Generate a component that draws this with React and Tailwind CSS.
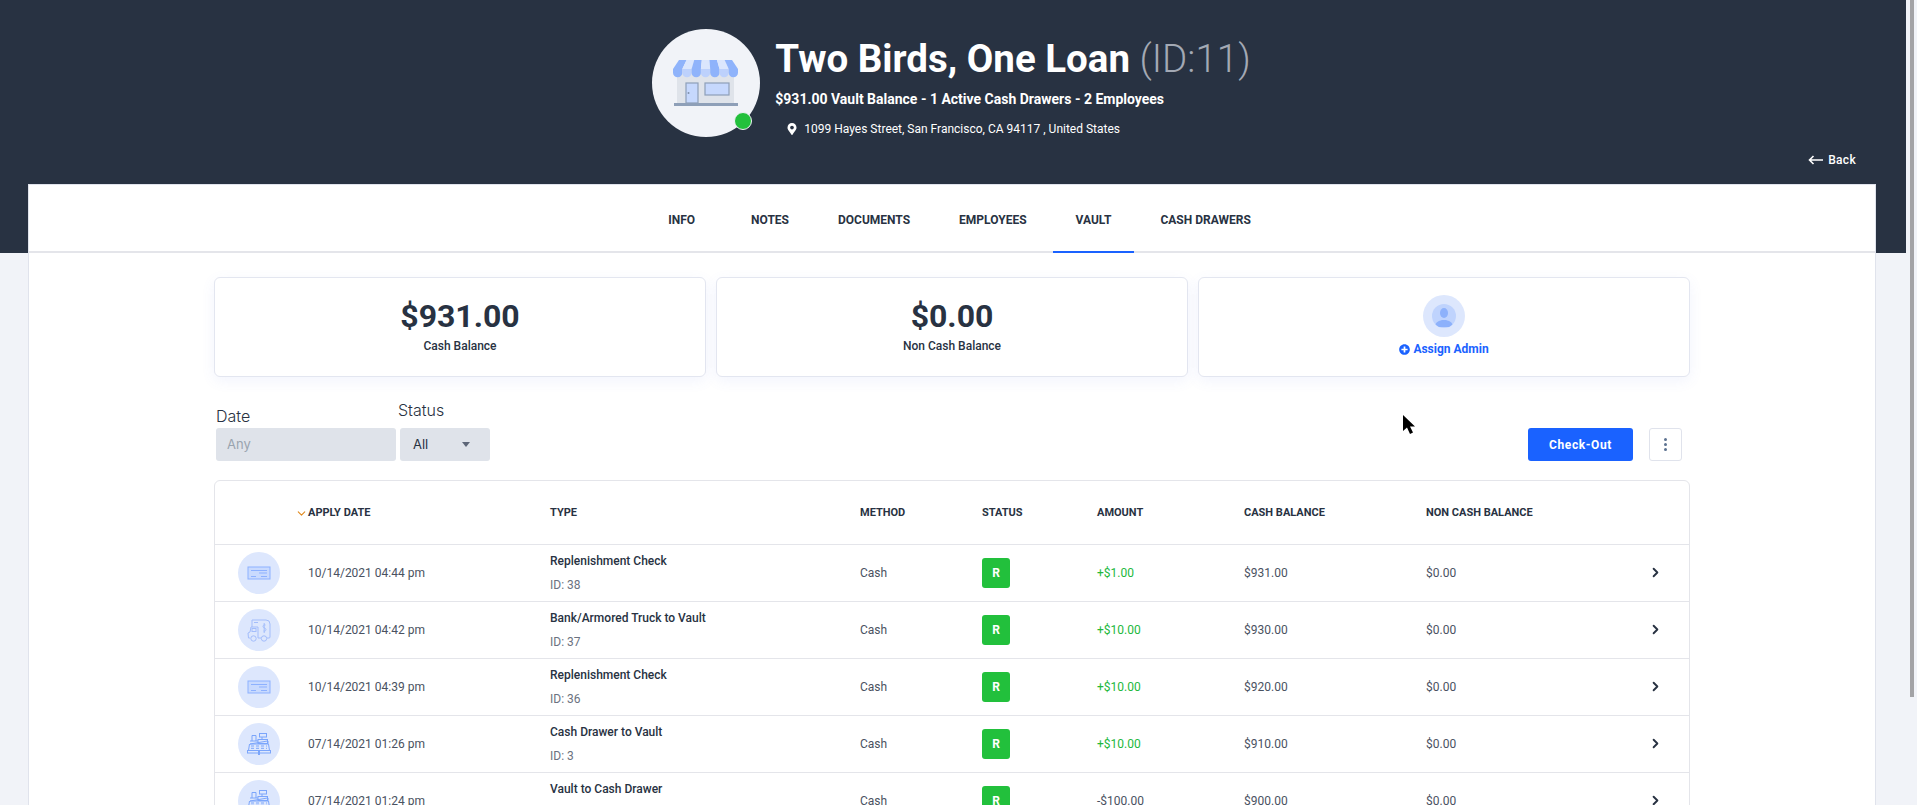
import React from 'react'
import { ChevronDown, ChevronRight } from 'lucide-react'
import { FaMapMarkerAlt, FaPlusCircle } from 'react-icons/fa'

const TABS = ['Info','Notes','Documents','Employees','Vault','Cash Drawers']

const ROWS = [
  { icon:'check', date:'10/14/2021 04:44 pm', type:'Replenishment Check', id:'ID: 38', amount:'+$1.00', cash:'$931.00' },
  { icon:'truck', date:'10/14/2021 04:42 pm', type:'Bank/Armored Truck to Vault', id:'ID: 37', amount:'+$10.00', cash:'$930.00' },
  { icon:'check', date:'10/14/2021 04:39 pm', type:'Replenishment Check', id:'ID: 36', amount:'+$10.00', cash:'$920.00' },
  { icon:'register', date:'07/14/2021 01:26 pm', type:'Cash Drawer to Vault', id:'ID: 3', amount:'+$10.00', cash:'$910.00' },
  { icon:'register', date:'07/14/2021 01:24 pm', type:'Vault to Cash Drawer', id:'ID: 2', amount:'-$100.00', cash:'$900.00' },
]

const COLS = 'grid grid-cols-[93px_242px_310px_122px_115px_147px_182px_1fr] items-center'

function StoreIcon(){
  return (
    <svg width="66" height="46" viewBox="0 0 66 46">
      <rect x="4" y="8" width="57" height="36" fill="#dfe3ea" />
      <rect x="13" y="23" width="12" height="20" fill="#c6d8fd" stroke="#8e9fb8" strokeWidth="1.2" />
      <circle cx="15.5" cy="33" r="1" fill="#7f91ab" />
      <rect x="32" y="23" width="24" height="12" fill="#c6d8fd" stroke="#8e9fb8" strokeWidth="1.2" />
      <rect x="1" y="43" width="64" height="3" fill="#8e9fb8" />
      {/* awning */}
      <path d="M6 0h7.600L9.300 9H0z" fill="#8fb3fb" />
      <path d="M13.600 0h7.600l-2.600 9H9.300z" fill="#dbe6fd" />
      <path d="M21.200 0h7.600l-.9 9h-9.300z" fill="#8fb3fb" />
      <path d="M28.800 0h7.600l.8 9h-9.300z" fill="#dbe6fd" />
      <path d="M36.400 0H44l2.500 9h-9.300z" fill="#8fb3fb" />
      <path d="M44 0h7.600l4.100 9h-9.200z" fill="#dbe6fd" />
      <path d="M51.600 0H59l6 9h-9.300z" fill="#8fb3fb" />
      <path d="M0 9h9.300v3.700a4.650 4.650 0 0 1-9.300 0z" fill="#8fb3fb" />
      <path d="M9.300 9h9.300v3.700a4.650 4.650 0 0 1-9.300 0z" fill="#bdd1fc" />
      <path d="M18.600 9h9.300v3.700a4.650 4.650 0 0 1-9.300 0z" fill="#8fb3fb" />
      <path d="M27.900 9h9.300v3.700a4.650 4.650 0 0 1-9.300 0z" fill="#bdd1fc" />
      <path d="M37.200 9h9.300v3.700a4.650 4.650 0 0 1-9.300 0z" fill="#8fb3fb" />
      <path d="M46.500 9h9.200v3.700a4.600 4.600 0 0 1-9.200 0z" fill="#bdd1fc" />
      <path d="M55.700 9H65v3.700a4.650 4.650 0 0 1-9.300 0z" fill="#8fb3fb" />
    </svg>
  )
}

function RowIcon({ kind }){
  if(kind==='check') return (
    <svg width="24" height="14" viewBox="0 0 24 14" fill="none" stroke="#8db1ff" strokeWidth="1">
      <rect x="1" y="1" width="22" height="12" fill="#c9dafe" />
      <path d="M4 4.500h16M12 7h8M14 10.500h6M4 10.500h5" />
    </svg>
  )
  if(kind==='truck') return (
    <svg width="24" height="23" viewBox="0 0 24 23" fill="none" stroke="#a3bdfb" strokeWidth="1">
      <path d="M5 1h14a4 4 0 0 1 4 4v13a1 1 0 0 1-1 1h-2M5 1v7" />
      <path d="M11 19h3M3 19H1.500L1 14l2-1 1-5h7v11" />
      <rect x="5" y="9.500" width="4" height="3" />
      <circle cx="6.500" cy="19.500" r="2.700" />
      <circle cx="17" cy="19.500" r="2.700" />
      <path d="M18.500 6c-2.500-1-3.500 2.500-1 3 2.500.5 1.500 4-1 3M17.200 4v10" />
      <path d="M7 3.500h4" />
    </svg>
  )
  return (
    <svg width="24" height="22" viewBox="0 0 24 22" fill="none" stroke="#7ba5fb" strokeWidth="1">
      <rect x="12.500" y="0.500" width="7" height="3.500" />
      <path d="M15 4v3M5 8V2.500h4V8" />
      <rect x="11" y="6.500" width="9.500" height="4" />
      <path d="M3 8h8M20.500 8H21V11H3z" />
      <path d="M2.500 11 1.500 17.500h21L21.500 11" />
      <path d="M4 13h3M9 13h3M14 13h3M19 13h1M4 15.300h3M9 15.300h3M14 15.300h3M19 15.300h1" />
      <rect x="0.500" y="17.500" width="23" height="2.500" />
      <path d="M12 18v4" strokeWidth="2" />
    </svg>
  )
}

function PersonAvatar(){
  return (
    <div className="w-[42px] h-[42px] rounded-full bg-[#dde7fd] flex items-center justify-center">
      <div className="w-6 h-6 rounded-full bg-[#bfd3fd] overflow-hidden flex items-center justify-center">
        <svg width="24" height="24" viewBox="0 0 24 24" fill="#8db1fb">
          <ellipse cx="12" cy="9" rx="4" ry="5" />
          <path d="M3 23c0-5 4-6 7-7h4c3 1 7 2 7 7z" />
        </svg>
      </div>
    </div>
  )
}

function Card({ className, children }){
  return (
    <div className={"h-[100px] bg-white border border-[#e3e6f0] rounded-md shadow-[0_4px_14px_rgba(90,120,230,0.08)] flex flex-col items-center " + className}>
      {children}
    </div>
  )
}

export default function App(){
  return (
    <div className="h-[805px] w-full overflow-hidden flex bg-[#f1f3f8] font-['Roboto',sans-serif] text-[#283242]">
      <div className="w-[1906px] shrink-0">
        <header className="h-[253px] bg-[#283242] text-white pt-[29px]">
          <div className="flex justify-center pr-[3px]">
            <div className="relative w-[108px] h-[108px] rounded-full bg-[#f1f3f8] flex items-center justify-center">
              <StoreIcon />
              <span className="absolute left-[82px] top-[83px] w-[18px] h-[18px] rounded-full bg-[#22c03c] border border-[#f1f3f8]"></span>
            </div>
            <div className="ml-[15px]">
              <h1 className="text-[38.500px] leading-[44px] mt-[8px] font-bold">Two Birds, One Loan <span className="font-light text-[#a3a9b4]">(ID:11)</span></h1>
              <div className="text-[14px] font-bold mt-[9px] leading-[18px]">$931.00 Vault Balance - 1 Active Cash Drawers - 2 Employees</div>
              <div className="flex items-center text-[12px] leading-[16px] mt-[13px] ml-[11px]">
                <FaMapMarkerAlt size={12} />
                <span className="ml-[6px]">1099 Hayes Street, San Francisco, CA 94117 , United States</span>
              </div>
            </div>
          </div>
          <div className="flex justify-end items-center pr-[50px] mt-[15px] h-4 text-[12px]">
            <svg width="15" height="10" viewBox="0 0 15 10" fill="none" stroke="#fff" strokeWidth="1.600">
              <path d="M15 5H1.500M5.500 1 1.500 5l4 4" />
            </svg>
            <span className="ml-[5px] font-medium tracking-[0.3px]">Back</span>
          </div>
        </header>

        <main className="ml-7 w-[1848px] -mt-[69px] h-[621px] bg-white border-x border-t border-[#e0e3ec]">
          <nav className="h-[68px] border-b-2 border-[#e4e5ea] flex justify-center pl-[15px]">
            {TABS.map((t,i)=>(
              <div key={t} className={"h-[68px] px-[22.500px] mx-[2px] flex items-center pt-[4px] text-[12px] font-bold uppercase border-b-2 " + (t==='Vault' ? 'border-[#1a62ff]' : 'border-transparent') + (i===0 ? ' mr-[9px]' : '')}>
                {t}
              </div>
            ))}
          </nav>

          <div className="w-[1476px] ml-[185px] pt-[24px]">
            <div className="grid grid-cols-[492px_472px_492px] gap-[10px]">
              <Card className="pt-[21px]">
                <div className="text-[32px] leading-[34px] font-bold">$931.00</div>
                <div className="text-[12px] font-medium mt-[4px]">Cash Balance</div>
              </Card>
              <Card className="pt-[21px]">
                <div className="text-[32px] leading-[34px] font-bold">$0.00</div>
                <div className="text-[12px] font-medium mt-[4px]">Non Cash Balance</div>
              </Card>
              <Card className="pt-[17px]">
                <PersonAvatar />
                <div className="flex items-center mt-[3px] text-[12px] font-bold text-[#1a62ff]">
                  <FaPlusCircle size={11} />
                  <span className="ml-[3px]">Assign Admin</span>
                </div>
              </Card>
            </div>

            <div className="flex items-end mt-[28px] h-[56px] relative">
              <div className="ml-[2px] w-[180px] font-['Inter',sans-serif]">
                <div className="text-[16px] font-light leading-[20px] mb-[2px]">Date</div>
                <div className="h-[33px] bg-[#dfe3ea] rounded-[3px] pl-[11px] flex items-center text-[13px] text-[#9aa3af]">Any</div>
              </div>
              <div className="ml-[2px] w-[92px] font-['Inter',sans-serif]">
                <div className="text-[16px] font-light leading-[20px] mb-[8px]">Status</div>
                <div className="ml-[2px] w-[90px] h-[33px] bg-[#dfe3ea] rounded-[3px] pl-[13px] flex items-center text-[13px]">
                  <span>All</span>
                  <span className="ml-[34px] w-0 h-0 border-x-[4.500px] border-x-transparent border-t-[5px] border-t-[#5d6678]"></span>
                </div>
              </div>
              <button className="ml-auto w-[105px] h-[33px] bg-[#1a62ff] rounded-[3px] text-white text-[12px] font-bold tracking-[0.6px]">Check-Out</button>
              <div className="ml-[16px] mr-[8px] w-[33px] h-[33px] bg-white border border-[#e0e3ec] rounded-[3px] flex flex-col items-center justify-center gap-[2px]">
                <span className="w-[3px] h-[3px] rounded-full bg-[#5c7290]"></span>
                <span className="w-[3px] h-[3px] rounded-full bg-[#5c7290]"></span>
                <span className="w-[3px] h-[3px] rounded-full bg-[#5c7290]"></span>
              </div>
              {/* mouse pointer in the shot */}
              <svg className="absolute left-[1189px] top-[10px]" width="13" height="20" viewBox="0 0 13 20" fill="#000">
                <path d="M0 0v16l4-3.500 3 6.500 3-1.500-3-6h5z" />
              </svg>
            </div>

            <div className="mt-[19px] border border-[#e4e5ea] rounded-t-md bg-white">
              <div className={COLS + " h-[63px] text-[11px] font-bold pt-[1px]"}>
                <div></div>
                <div className="relative">
                  <ChevronDown size={13} strokeWidth={2} className="absolute -left-[13px] top-[2px] text-[#e08a1e]" />
                  APPLY DATE
                </div>
                <div>TYPE</div>
                <div>METHOD</div>
                <div>STATUS</div>
                <div>AMOUNT</div>
                <div>CASH BALANCE</div>
                <div>NON CASH BALANCE</div>
              </div>
              {ROWS.map(r=>(
                <div key={r.id} className={COLS + " h-[57px] border-t border-[#e4e5ea] text-[12px] text-[#4a5261]"}>
                  <div className="pl-[23px]">
                    <div className="w-[42px] h-[42px] rounded-full bg-[#dde7fd] flex items-center justify-center">
                      <RowIcon kind={r.icon} />
                    </div>
                  </div>
                  <div>{r.date}</div>
                  <div>
                    <div className="font-medium text-[#283242] leading-[16px]">{r.type}</div>
                    <div className="mt-[8px] leading-[16px] text-[#6b7280]">{r.id}</div>
                  </div>
                  <div>Cash</div>
                  <div>
                    <div className="w-[28px] h-[30px] rounded-[3px] bg-[#22c03c] text-white font-bold flex items-center justify-center">R</div>
                  </div>
                  <div className={r.amount[0]==='+' ? 'text-[#22b83c]' : ''}>{r.amount}</div>
                  <div>{r.cash}</div>
                  <div className="flex items-center justify-between pr-[26px]">
                    <span>$0.00</span>
                    <ChevronRight size={15} strokeWidth={3} className="-mt-[1px] text-[#283242]" />
                  </div>
                </div>
              ))}
            </div>
          </div>
        </main>
      </div>
      <div className="w-[11px] shrink-0 pl-[4px] pr-[3px]">
        <div className="h-[697px] bg-[#a3a3a6]"></div>
      </div>
    </div>
  )
}
